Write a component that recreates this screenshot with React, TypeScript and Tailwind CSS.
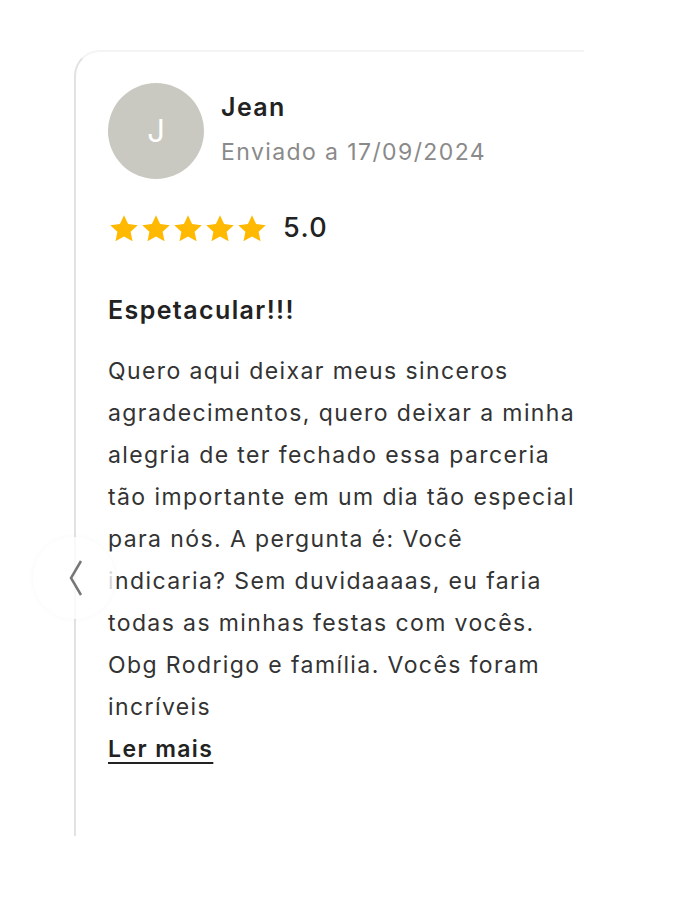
import React from "react";

const lines = [
  "Quero aqui deixar meus sinceros",
  "agradecimentos, quero deixar a minha",
  "alegria de ter fechado essa parceria",
  "tão importante em um dia tão especial",
  "para nós. A pergunta é: Você",
  "indicaria? Sem duvidaaaas, eu faria",
  "todas as minhas festas com vocês.",
  "Obg Rodrigo e família. Vocês foram",
  "incríveis",
];

function Star() {
  return (
    <svg width="30" height="29" viewBox="0 0 24 23" className="shrink-0">
      <path
        d="M12 0.8l3.3 7.1 7.7 0.9-5.7 5.3 1.5 7.6L12 17.9l-6.8 3.8 1.5-7.6L1 8.8l7.7-0.9z"
        fill="#FFB900"
      />
    </svg>
  );
}

export default function App() {
  return (
    <div
      className="relative w-[685px] h-[918px] bg-white overflow-hidden"
      style={{ fontFamily: "Inter, 'Noto Sans', sans-serif" }}
    >
      <div className="ml-[74px] mt-[50px] w-[510px] h-[786px] rounded-tl-[26px] border-t-2 border-t-[#f4f4f4] border-l-2 border-l-[#e2e2e2] pt-[31px] pl-[32px] tracking-[1.4px]">
        <div className="flex items-start">
          <div className="w-[96px] h-[96px] rounded-full bg-[#c9c9c1] flex items-center justify-center text-white text-[31px] font-normal tracking-normal">
            J
          </div>
          <div className="ml-[17px] pt-[8px]">
            <div className="text-[25px] leading-[32px] font-semibold text-[#222]">Jean</div>
            <div className="mt-[14px] text-[23px] leading-[30px] text-[#8a8a8a]">Enviado a 17/09/2024</div>
          </div>
        </div>
        <div className="mt-[33px] flex items-center">
          <div className="flex gap-[2px] ml-[1px]">
            <Star />
            <Star />
            <Star />
            <Star />
            <Star />
          </div>
          <span className="ml-[16px] text-[27px] leading-[32px] font-medium text-[#222]">5.0</span>
        </div>
        <div className="mt-[50px] text-[25px] leading-[32px] font-semibold text-[#222]">Espetacular!!!</div>
        <div className="mt-[24px] text-[23px] leading-[42px] text-[#333]">
          {lines.map((l) => (
            <div key={l} className="whitespace-nowrap">{l}</div>
          ))}
        </div>
        <div className="text-[23px] leading-[42px] font-semibold text-[#222] underline underline-offset-[5px] decoration-2">
          Ler mais
        </div>
      </div>
      <div className="absolute left-[33px] top-[537px] w-[82px] h-[82px] rounded-full bg-white/80 shadow-[0_0_6px_rgba(0,0,0,0.03)]">
        <svg width="16" height="38" viewBox="0 0 16 38" className="absolute left-[35px] top-[22px]">
          <path d="M13 2 L3 19 L13 36" stroke="#777" strokeWidth="2.5" fill="none" />
        </svg>
      </div>
    </div>
  );
}
